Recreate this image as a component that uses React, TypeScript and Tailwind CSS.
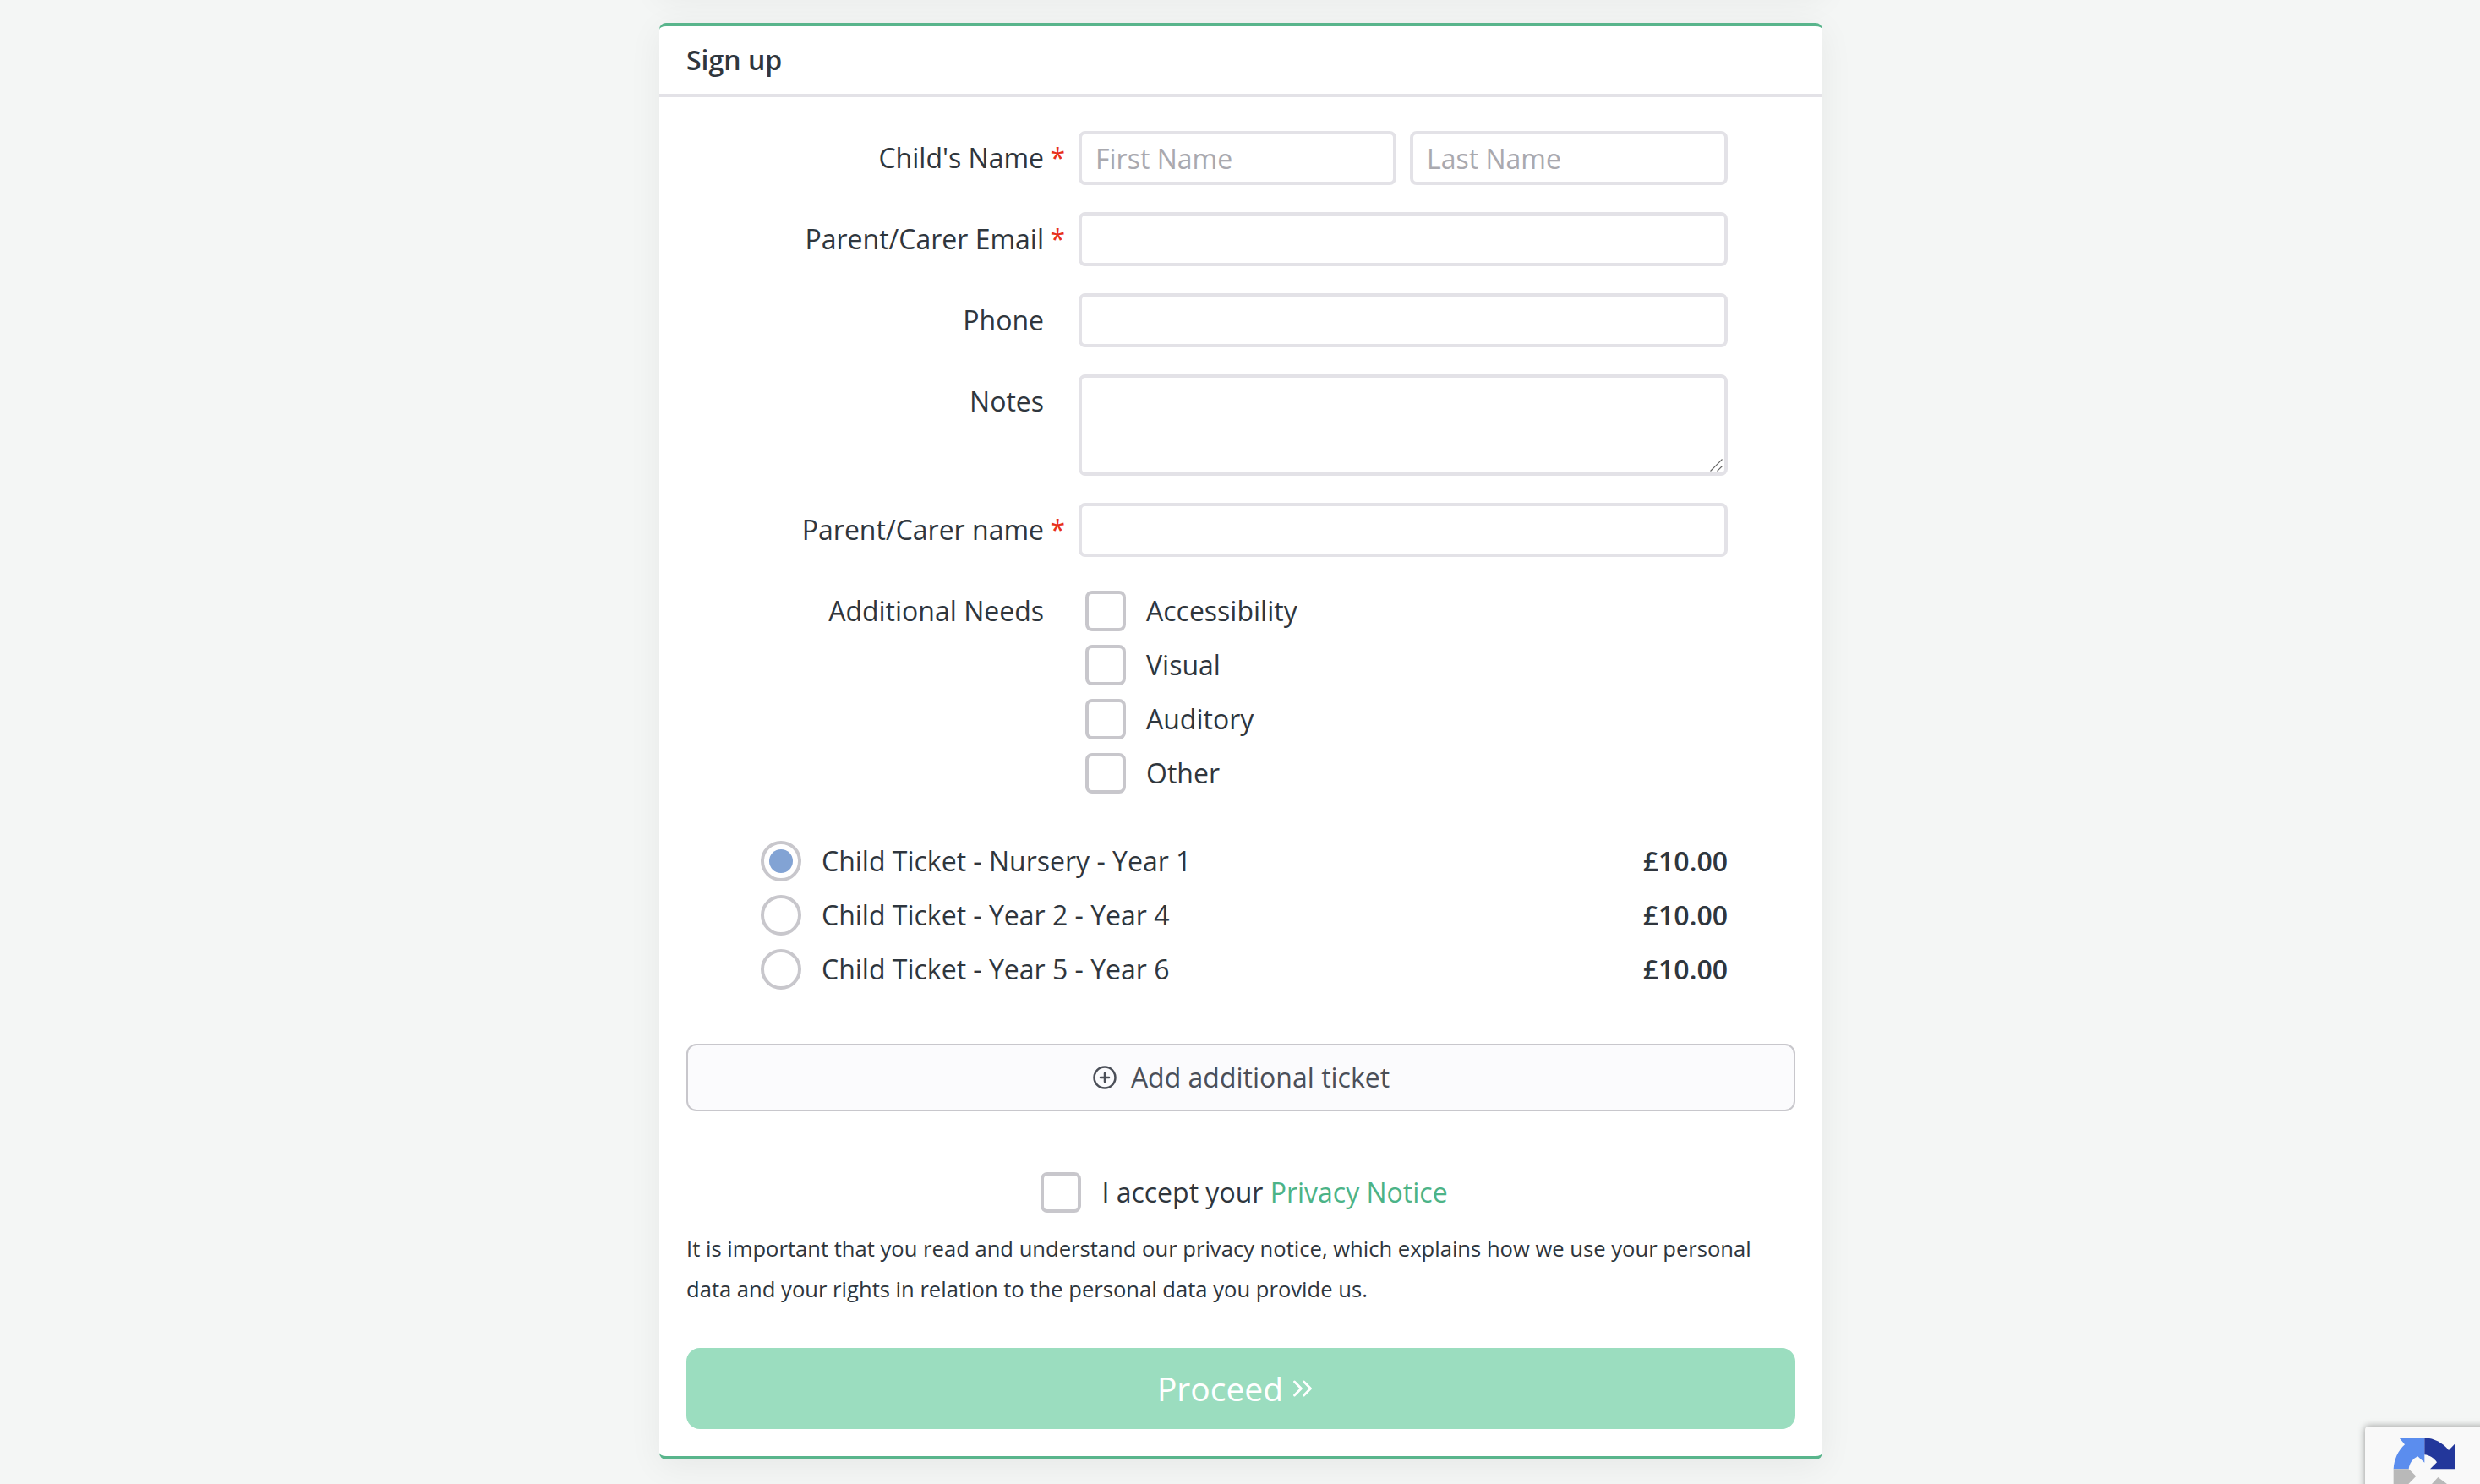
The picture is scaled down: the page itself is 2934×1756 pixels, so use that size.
import { ChevronsRight, CirclePlus } from 'lucide-react';
import type { ReactNode } from 'react';

const INPUT = 'h-16 rounded-lg border-4 border-[#e3e2e7] bg-white px-4 text-[32px] text-[#2f363d] placeholder:text-[#a9a9af] outline-none';
const BOX = 'size-12 shrink-0 appearance-none rounded-lg border-4 border-[#c8c7cc] bg-white';

function FormRow({ label, required, top, children }: { label: string; required?: boolean; top?: boolean; children: ReactNode }) {
  return (
    <div className="flex">
      <div className={`flex w-[464px] shrink-0 justify-end pr-4 text-[32px] leading-[64px] text-[#2f363d] ${top ? 'items-start' : 'items-center'}`}>
        <span>{label}</span>
        <span className="w-[25px] text-right text-[#e8311a]">{required ? '*' : ''}</span>
      </div>
      <div className="flex w-[768px] gap-4">{children}</div>
    </div>
  );
}

function Check({ label }: { label: string }) {
  return (
    <label className="flex h-16 items-center pl-2">
      <input type="checkbox" className={BOX} />
      <span className="ml-6 text-[32px] text-[#2f363d]">{label}</span>
    </label>
  );
}

function Ticket({ name, checked }: { name: string; checked?: boolean }) {
  return (
    <div className="flex h-16 items-center pl-[88px] pr-[80px]">
      <span className="flex size-12 shrink-0 items-center justify-center rounded-full border-4 border-[#c8c7cc] bg-white">
        {checked && <span className="size-7 rounded-full bg-[#82a3d4]" />}
      </span>
      <span className="ml-6 text-[32px] text-[#2f363d]">{name}</span>
      <span className="ml-auto text-[32px] font-semibold text-[#2f363d]">£10.00</span>
    </div>
  );
}

function RecaptchaBadge() {
  return (
    <div className="absolute left-[2798px] top-[1688px] h-[120px] w-[200px] rounded bg-[#f9f9f9] shadow-[0_0_8px_rgba(0,0,0,0.4)]">
      <svg className="absolute left-[33px] top-[13px] h-[55px] w-[76px]" viewBox="290 183 228 165">
        <path fill="#5b8dee" d="M312 184H402V272L378 250C360 258 348 275 346 295H292C294 260 308 230 332 208Z" />
        <path fill="#23379b" d="M402 184C438 186 466 202 488 228L512 203V295H422L446 271C435 255 420 246 402 244Z" />
        <path fill="#b9b9b9" d="M292 295H346L372 320L345 348H292ZM450 324L482 348H428Z" />
      </svg>
    </div>
  );
}

export default function App() {
  return (
    <div className="relative flex h-[1756px] justify-center overflow-hidden bg-[#f4f6f5] pl-[2px] font-['Open_Sans',sans-serif]">
      {/* previous card's shadow bleeding in from above the fold */}
      <div className="absolute left-[780px] top-[-50px] h-10 w-[1376px] shadow-[0_8px_40px_rgba(0,0,0,0.06)]" />

      <div className="relative mt-[27px] h-[1700px] w-[1376px] rounded-lg border-y-4 border-[#59b58c] bg-white shadow-[0_8px_40px_rgba(0,0,0,0.06)]">
        <div className="flex h-[84px] items-center border-b-4 border-[#e3e2e7] px-8 text-[32px] font-semibold text-[#2f363d]">
          Sign up
        </div>

        <div className="px-8 pt-10">
          <div className="flex flex-col gap-8">
            <FormRow label="Child's Name" required>
              <input className={`${INPUT} w-[376px]`} placeholder="First Name" />
              <input className={`${INPUT} w-[376px]`} placeholder="Last Name" />
            </FormRow>
            <FormRow label="Parent/Carer Email" required>
              <input className={`${INPUT} w-full`} />
            </FormRow>
            <FormRow label="Phone">
              <input className={`${INPUT} w-full`} />
            </FormRow>
            <FormRow label="Notes" top>
              <div className="relative h-[120px] w-full">
                <textarea className="block h-full w-full resize-none rounded-lg border-4 border-[#e3e2e7] bg-white outline-none" />
                {/* resize grip */}
                <svg className="absolute bottom-1 right-[5px] size-4" viewBox="0 0 16 16" fill="none" stroke="#666" strokeWidth="1.2">
                  <path d="M0.5 14.5L14.5 0.5M8.5 14.5L14.5 8.5" />
                </svg>
              </div>
            </FormRow>
            <FormRow label="Parent/Carer name" required>
              <input className={`${INPUT} w-full`} />
            </FormRow>
            <FormRow label="Additional Needs" top>
              <div className="flex flex-col">
                <Check label="Accessibility" />
                <Check label="Visual" />
                <Check label="Auditory" />
                <Check label="Other" />
              </div>
            </FormRow>
          </div>

          <div className="mt-10 flex flex-col">
            <Ticket name="Child Ticket - Nursery - Year 1" checked />
            <Ticket name="Child Ticket - Year 2 - Year 4" />
            <Ticket name="Child Ticket - Year 5 - Year 6" />
          </div>

          <button className="mt-14 flex h-20 w-full items-center justify-center rounded-xl border-2 border-[#c8c7cc] bg-[#fbfbfd] text-[32px] text-[#4b4f58]">
            <CirclePlus className="mr-4 size-[30px]" strokeWidth={2} />
            Add additional ticket
          </button>

          <label className="mt-[72px] flex items-center justify-center pl-2">
            <input type="checkbox" className={BOX} />
            <span className="ml-6 text-[32px] text-[#2f363d]">
              I accept your <a className="text-[#4cb387]">Privacy Notice</a>
            </span>
          </label>

          <p className="mt-[19px] text-[25.6px] leading-[48px] text-[#2f363d]">
            It is important that you read and understand our privacy notice, which explains how we use your personal data and your rights in relation to the personal data you provide us.
          </p>

          <button className="mt-[45px] flex h-24 w-full items-center justify-center rounded-2xl bg-[#9bddbf] pr-[7px] text-[39px] text-white">
            Proceed
            <ChevronsRight className="ml-1 size-[38px]" strokeWidth={1.8} />
          </button>
        </div>
      </div>
      <RecaptchaBadge />
    </div>
  );
}
